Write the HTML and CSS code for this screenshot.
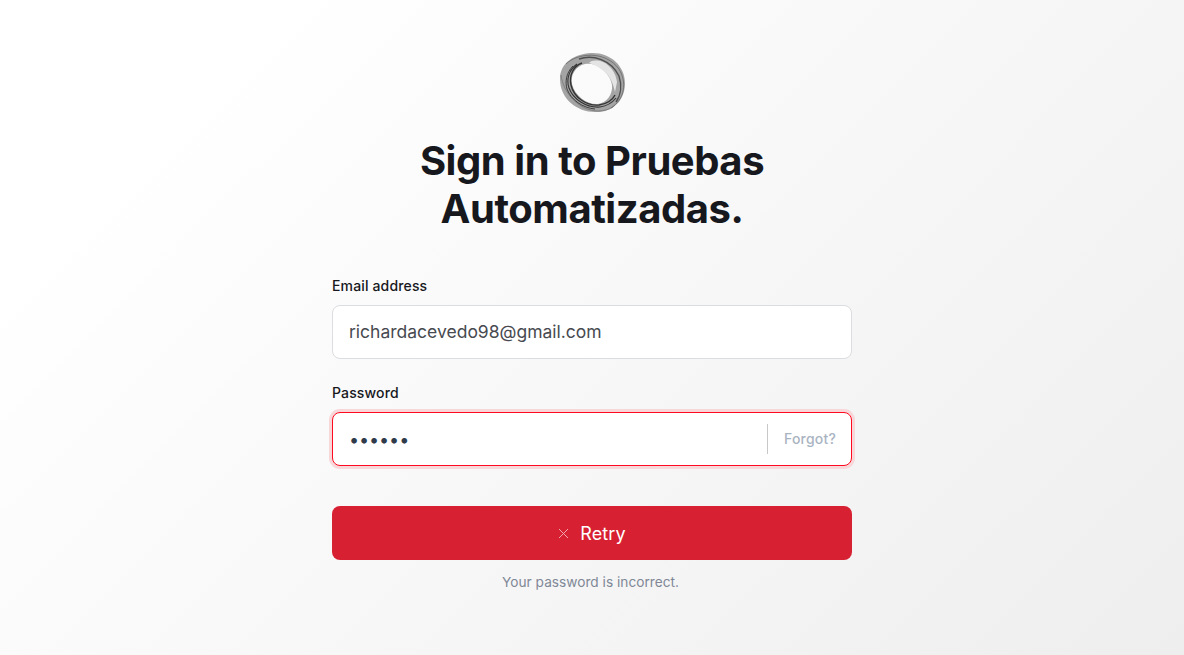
FILE: index.html
```html
<!DOCTYPE html>
<html lang="en">
<head>
  <meta charset="UTF-8">
  <meta name="viewport" content="width=device-width, initial-scale=1.0">
  <title>Sign in to Pruebas Automatizadas</title>
  <link rel="stylesheet" href="styles.css">
</head>
<body>
  <main class="login">
    <svg class="logo" width="66" height="62" viewBox="0 0 66 62" fill="none">
      <!-- soft base of the ring -->
      <path fill-rule="evenodd" d="M32 1C50 0 66 13 66 31C66 50 52 61 36 60C18 60 1 47 1 27C1 11 15 2 32 1ZM26 12C17 14 11 23 13 32C16 44 28 53 39 52C47 51 54 43 53 33C52 26 47 20 42 16C37 12 31 11 26 12Z" fill="#a4a4a4"/>
      <!-- light patch, top right -->
      <path d="M30 11C33 8 38 8 44 10C51 13 57 21 58 30L56 40C55 36 54 32 52 28C49 22 44 18 39 15C36 13 33 12 30 11Z" fill="#e4e4e4"/>
      <!-- outer edge -->
      <path d="M7 12C18 1 46 -2 60 17C68 30 66 47 52 56" stroke="#555" stroke-width="1" stroke-opacity="0.6"/>
      <path d="M20 7C34 2 52 8 60 24C63 33 62 43 57 50" stroke="#2a2a2a" stroke-width="1.4" stroke-opacity="0.7"/>
      <path d="M2 23C4 40 19 58 38 59C46 59 52 57 56 53" stroke="#666" stroke-width="1" stroke-opacity="0.6"/>
      <!-- dark lines hugging the hole -->
      <g stroke="#161616" stroke-opacity="0.8">
        <path d="M23 11C14 14 10 24 12 33C15 46 28 54 40 53C47 52 53 49 56 43" stroke-width="1.4"/>
        <path d="M18 12C10 18 7 27 10 36C14 47 27 56 41 55C48 54 53 51 57 46" stroke-width="1.1"/>
        <path d="M14 14C7 21 6 30 8 37C12 48 24 56 36 57" stroke-width="0.9"/>
      </g>
    </svg>
    <h1 class="title">Sign in to Pruebas Automatizadas.</h1>
    <form class="form">
      <label class="field-label" for="email">Email address</label>
      <input class="input email-input" id="email" type="text" value="richardacevedo98@gmail.com">
      <label class="field-label" for="password">Password</label>
      <div class="input password-box">
        <input class="password-input" id="password" type="password" value="secret">
        <a class="forgot" href="#">Forgot?</a>
      </div>
      <button class="retry" type="button">
        <svg width="11" height="11" viewBox="0 0 11 11" fill="none" stroke="#f2a6b0" stroke-width="1">
          <path d="M1 1L10 10M10 1L1 10"/>
        </svg>
        Retry
      </button>
      <p class="error">Your password is incorrect.</p>
    </form>
  </main>
</body>
</html>
```

FILE: styles.css
```css
* {
  box-sizing: border-box;
}
html, body {
  height: 100%;
}
body {
  margin: 0;
  font-family: Inter, "Liberation Sans", sans-serif;
  background: linear-gradient(135deg, #ffffff 15%, #eeeeee 100%);
  color: #16181d;
  overflow: hidden;
}
.login {
  width: 520px;
  margin: 0 auto;
  padding-top: 52px;
  display: flex;
  flex-direction: column;
  align-items: center;
}
.logo {
  display: block;
}
.title {
  margin: 23px 0 0;
  width: 400px;
  font-size: 40px;
  line-height: 48px;
  font-weight: 700;
  letter-spacing: -0.45px;
  text-align: center;
}
.form {
  width: 100%;
  margin-top: 44px;
  display: flex;
  flex-direction: column;
}
.field-label {
  font-size: 14px;
  line-height: 17px;
  font-weight: 550;
  letter-spacing: 0.15px;
  margin-bottom: 11px;
}
.input {
  width: 100%;
  height: 54px;
  background: #fff;
  border: 1px solid #dcdde0;
  border-radius: 8px;
  font-family: inherit;
  font-size: 17.5px;
  color: #474a50;
}
.email-input {
  padding: 0 16px 2px;
  margin-bottom: 25px;
  outline: none;
}
.password-box {
  display: flex;
  align-items: center;
  border-color: #ff0a1e;
  box-shadow: 0 0 0 3px #f8d7da;
  margin-bottom: 40px;
}
.password-input {
  flex: 1;
  min-width: 0;
  height: 100%;
  padding: 0 16px;
  border: none;
  outline: none;
  background: transparent;
  font-family: inherit;
  font-size: 18px;
  letter-spacing: -0.1px;
  color: #2f3a4a;
}
.forgot {
  height: 30px;
  line-height: 30px;
  padding: 0 15px 0 16px;
  border-left: 1px solid #c8c8c8;
  font-size: 14px;
  font-weight: 550;
  letter-spacing: 0.2px;
  color: #a9b3c2;
  text-decoration: none;
}
.retry {
  width: 100%;
  height: 54px;
  border: none;
  border-radius: 8px;
  background: #d82033;
  color: #fff;
  font-family: inherit;
  font-size: 18px;
  font-weight: 400;
  letter-spacing: 0.1px;
  display: flex;
  align-items: center;
  justify-content: center;
  gap: 11px;
  cursor: pointer;
}
.error {
  margin: 14px 0 0;
  padding-right: 3px;
  font-size: 13.7px;
  line-height: 17px;
  text-align: center;
  color: #808896;
}
```
